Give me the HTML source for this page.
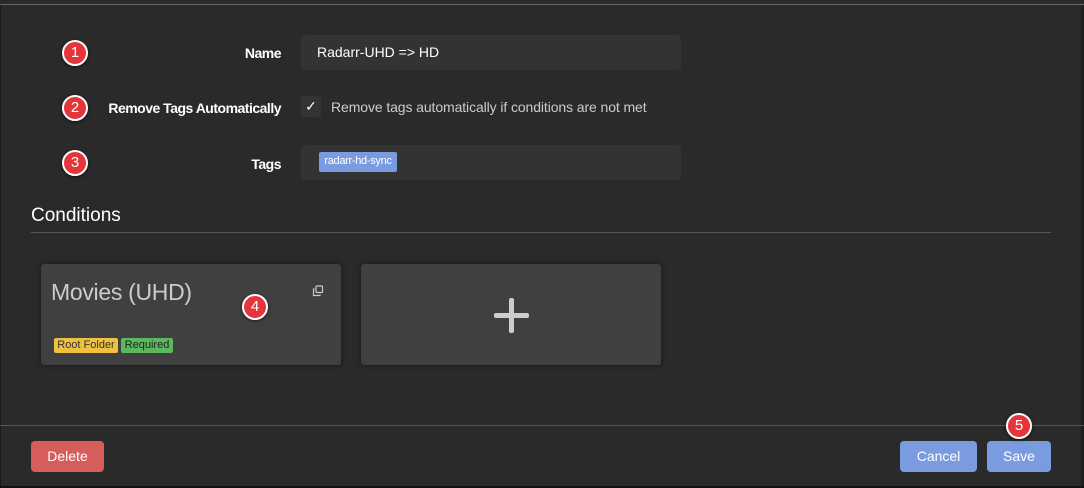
<!DOCTYPE html>
<html><head><style>
*{margin:0;padding:0;box-sizing:border-box}
body{width:1084px;height:488px;background:#2a2a2a;position:relative;overflow:hidden;font-family:"Liberation Sans",sans-serif;color:#ccc}
.a{position:absolute;white-space:nowrap}
.badge{position:absolute;width:26px;height:26px;border-radius:50%;background:#e4353a;border:2px solid #fff;color:#fff;font-size:15px;text-align:center;line-height:22px;box-shadow:0 1px 3px rgba(0,0,0,.6)}
.lbl{position:absolute;right:803px;font-weight:bold;color:#fff;font-size:14px;letter-spacing:-0.5px;white-space:nowrap}
.inp{position:absolute;left:301px;width:380px;height:35px;background:#333;border-radius:4px}
.btn{position:absolute;height:31px;border-radius:4px;color:#fff;font-size:14px;text-align:center;line-height:31px}
</style></head><body>
<div class="a" style="left:0;top:4px;width:1084px;height:1px;background:#666"></div>
<div class="a" style="left:0;top:5px;width:1px;height:483px;background:#1a1a1a"></div>
<div class="a" style="left:1081px;top:5px;width:3px;height:483px;background:#1f1f1f"></div>
<div class="a" style="left:0;top:486px;width:1084px;height:2px;background:#111"></div>

<div class="badge" style="left:62px;top:40px">1</div>
<div class="lbl" style="top:45px">Name</div>
<div class="inp" style="top:35px"><span class="a" style="left:16px;top:9px;color:#fff;font-size:14px">Radarr-UHD =&gt; HD</span></div>

<div class="badge" style="left:62px;top:95px">2</div>
<div class="lbl" style="top:100px">Remove Tags Automatically</div>
<div class="a" style="left:301px;top:96px;width:20px;height:21px;background:#333;border-radius:2px;color:#fff;font-size:14px;text-align:center;line-height:21px">&#10003;</div>
<div class="a" style="left:331px;top:99px;font-size:14px;color:#ccc;letter-spacing:-0.1px">Remove tags automatically if conditions are not met</div>

<div class="badge" style="left:62px;top:150px">3</div>
<div class="lbl" style="top:156px">Tags</div>
<div class="inp" style="top:145px"><span class="a" style="left:18px;top:7px;height:20px;width:78px;background:#7a9be0;color:#fff;font-size:11px;line-height:18px;text-align:center;border-radius:2px;letter-spacing:-0.3px">radarr-hd-sync</span></div>

<div class="a" style="left:31px;top:205px;font-size:19px;color:#fff">Conditions</div>
<div class="a" style="left:31px;top:232px;width:1020px;height:1px;background:#555"></div>

<div class="a" style="left:41px;top:264px;width:300px;height:101px;background:#404040;border-radius:3px;box-shadow:0 0 6px rgba(0,0,0,.5)">
 <div class="a" style="left:10px;top:15px;font-size:23px;color:#ccc;letter-spacing:-0.3px">Movies (UHD)</div>
 <svg class="a" style="left:271px;top:21px" width="12" height="12" viewBox="0 0 12 12" fill="none" stroke="#ccc" stroke-width="1.2"><rect x="4" y="1" width="6.5" height="6.5" rx="1"/><path d="M2.5 4H1.5V10.5H8V9.5"/></svg>
 <div class="a" style="left:13px;top:74px;height:15px;width:64px;background:#f0c040;color:#333;font-size:11px;line-height:15px;border-radius:2px;text-align:center">Root Folder</div>
 <div class="a" style="left:80px;top:74px;height:15px;width:52px;background:#5cb85c;color:#222;font-size:11px;line-height:15px;border-radius:2px;text-align:center">Required</div>
</div>
<div class="badge" style="left:242px;top:294px">4</div>

<div class="a" style="left:361px;top:264px;width:300px;height:101px;background:#404040;border-radius:3px;box-shadow:0 0 6px rgba(0,0,0,.5)">
 <div class="a" style="left:133px;top:49px;width:35px;height:5px;background:#ccc;border-radius:2px"></div>
 <div class="a" style="left:148px;top:34px;width:5px;height:35px;background:#ccc;border-radius:2px"></div>
</div>

<div class="a" style="left:0;top:425px;width:1084px;height:1px;background:#555"></div>
<div class="btn" style="left:31px;top:441px;width:73px;background:#d65d5a">Delete</div>
<div class="btn" style="left:900px;top:441px;width:77px;background:#7a9be0">Cancel</div>
<div class="btn" style="left:987px;top:441px;width:64px;background:#7a9be0">Save</div>
<div class="badge" style="left:1006px;top:413px">5</div>
</body></html>
